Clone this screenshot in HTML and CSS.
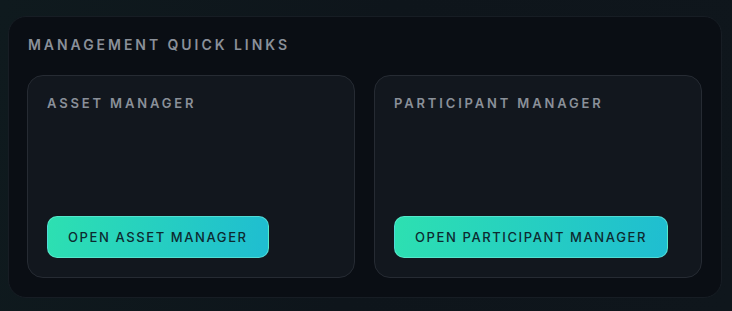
FILE: index.html
```html
<!DOCTYPE html>
<html>
<head>
<meta charset="utf-8">
<link rel="stylesheet" href="styles.css">
</head>
<body>
<section class="panel">
  <h2 class="panel-title">Management Quick Links</h2>
  <div class="grid">
    <div class="card">
      <h3 class="card-title">Asset Manager</h3>
      <button class="btn">Open Asset Manager</button>
    </div>
    <div class="card">
      <h3 class="card-title">Participant Manager</h3>
      <button class="btn">Open Participant Manager</button>
    </div>
  </div>
</section>
</body>
</html>
```
FILE: styles.css
```css
html, body {
  margin: 0;
  height: 100%;
}
body {
  background: linear-gradient(100deg, #0f1a1e 0%, #0e151b 50%, #0f161c 100%);
  padding: 16px 10px 0 8px;
  box-sizing: border-box;
  font-family: Inter, "Noto Sans", sans-serif;
}
.panel {
  background: #0a0e14;
  border: 1px solid #171d24;
  border-radius: 18px;
  padding: 19px 19px 19px 18px;
  height: 282px;
  box-sizing: border-box;
}
.panel-title {
  margin: 0 0 22px 1px;
  font-size: 14px;
  line-height: 17px;
  font-weight: 600;
  letter-spacing: 2.95px;
  text-transform: uppercase;
  color: #8a9099;
}
.grid {
  display: grid;
  grid-template-columns: 1fr 1fr;
  gap: 19px;
}
.card {
  background: #12171e;
  border: 1px solid #262b33;
  border-radius: 16px;
  padding: 19px 19px 19px 19px;
  height: 203px;
  box-sizing: border-box;
  display: flex;
  flex-direction: column;
  justify-content: space-between;
  align-items: flex-start;
}
.card-title {
  margin: 0;
  font-size: 13px;
  line-height: 16px;
  font-weight: 600;
  letter-spacing: 2.85px;
  text-transform: uppercase;
  color: #8a9099;
}
.btn {
  height: 42px;
  padding: 0 20px;
  border-radius: 10px;
  border: 1px solid rgba(120, 240, 220, 0.55);
  background: linear-gradient(100deg, #2de0b1 0%, #1fbdd1 100%);
  color: #0d2a30;
  font-family: Inter, "Noto Sans", sans-serif;
  font-size: 13px;
  font-weight: 500;
  letter-spacing: 1.6px;
  text-transform: uppercase;
  cursor: pointer;
}
```
